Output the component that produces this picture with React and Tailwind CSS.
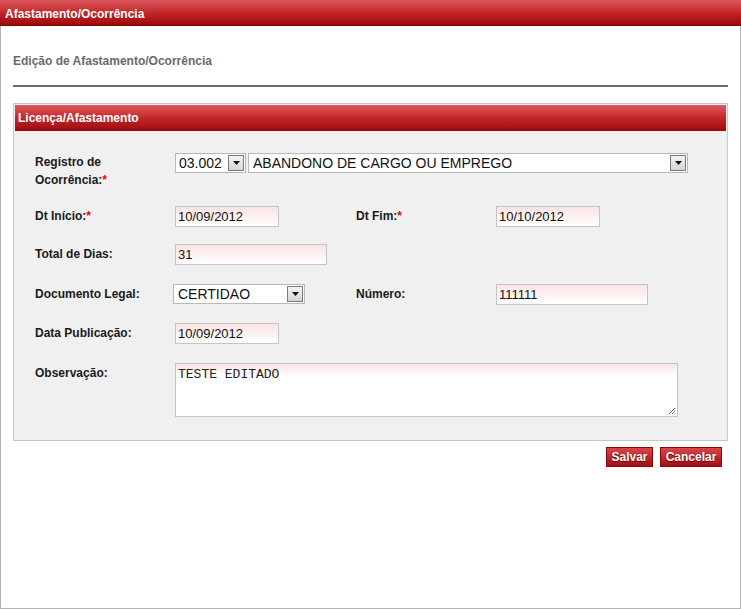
function Arrow() {
  return (
    <span className="absolute right-px top-px bottom-px w-[16px] border border-[#7a7a7a] bg-gradient-to-b from-[#f4f4f4] to-[#d4d4d4] flex items-center justify-center">
      <svg width="7" height="4" viewBox="0 0 7 4">
        <path d="M0 0h7L3.5 4z" fill="#111" />
      </svg>
    </span>
  );
}

function Select({ value, className }) {
  return (
    <div
      className={
        "relative h-[20px] border border-[#b8b8b8] bg-white text-[14px] leading-[18px] text-[#111] pl-[3px] " +
        className
      }
    >
      {value}
      <Arrow />
    </div>
  );
}

function Input({ value, className }) {
  return (
    <div
      className={
        "h-[21px] border border-[#c4c4c4] bg-gradient-to-b from-[#fbe3e3] to-white text-[13px] leading-[19px] text-[#111] pl-[2px] " +
        className
      }
    >
      {value}
    </div>
  );
}

function Label({ children, req }) {
  return (
    <div className="w-[140px] shrink-0 font-bold text-[12px] leading-[20px] text-[#1a1a1a]">
      {children}
      {req && <span className="text-[#e00]">*</span>}
    </div>
  );
}

function RedBtn({ children, className }) {
  return (
    <button className={"h-[20px] border border-[#8a0a0a] bg-gradient-to-b from-[#d6464b] via-[#c1262b] to-[#a30f12] text-white font-bold text-[12px] leading-[18px] [text-shadow:0_1px_1px_#600] " + className}>
      {children}
    </button>
  );
}

export default function App() {
  return (
    <div className="w-[741px] h-[609px] border border-[#b4b4b4] border-t-0 bg-white font-['Liberation_Sans',Arial,sans-serif]">
      <div className="h-[26px] -mx-px bg-gradient-to-b from-[#dc585d] via-[#c3262b] to-[#9c0808] border-b border-[#7e0505] text-white font-bold text-[12px] leading-[28px] pl-[5px]">
        Afastamento/Ocorrência
      </div>
      <div className="px-[12px]">
        <div className="mt-[27px] text-[12px] leading-[16px] font-bold text-[#6a6a6a]">
          Edição de Afastamento/Ocorrência
        </div>
        <div className="mt-[16px] h-[2px] bg-[#6b6b6b]" />
        <div className="mt-[16px] border border-[#c8c8c8] bg-[#f0f0f0] p-px">
          <div className="h-[26px] bg-gradient-to-b from-[#dc585d] via-[#c3262b] to-[#9c0808] text-white font-bold text-[12px] leading-[26px] pl-[3px]">
            Licença/Afastamento
          </div>
          <div className="pl-[20px] pt-[22px] pb-[22px]">
            <div className="flex items-start">
              <div className="w-[140px] shrink-0 font-bold text-[12px] leading-[18px] text-[#1a1a1a]">
                Registro de
                <br />
                Ocorrência:<span className="text-[#e00]">*</span>
              </div>
              <Select value="03.002" className="w-[71px]" />
              <Select value="ABANDONO DE CARGO OU EMPREGO" className="w-[440px] ml-[2px] pl-[4px]" />
            </div>
            <div className="flex items-start mt-[17px]">
              <Label req>Dt Início:</Label>
              <Input value="10/09/2012" className="w-[104px]" />
              <div className="w-[77px]" />
              <Label req>Dt Fim:</Label>
              <Input value="10/10/2012" className="w-[104px]" />
            </div>
            <div className="flex items-start mt-[17px]">
              <Label>Total de Dias:</Label>
              <Input value="31" className="w-[152px]" />
            </div>
            <div className="flex items-start mt-[19px]">
              <Label>Documento Legal:</Label>
              <Select value="CERTIDAO" className="w-[132px] -ml-[2px] pl-[4px]" />
              <div className="w-[51px]" />
              <Label>Número:</Label>
              <Input value="111111" className="w-[152px]" />
            </div>
            <div className="flex items-start mt-[18px]">
              <Label>Data Publicação:</Label>
              <Input value="10/09/2012" className="w-[104px]" />
            </div>
            <div className="flex items-start mt-[19px]">
              <Label>Observação:</Label>
              <div className="relative w-[503px] h-[54px] border border-[#c4c4c4] bg-gradient-to-b from-[#fbe3e3] via-white to-white [background-size:100%_24px] bg-no-repeat bg-white font-['Liberation_Mono','Courier_New',monospace] text-[13px] leading-[17px] text-[#222] pl-[2px] pt-[2px]">
                TESTE EDITADO
                <svg className="absolute right-[1px] bottom-[1px]" width="8" height="8" viewBox="0 0 8 8">
                  <path d="M7 1L1 7M7 4L4 7M7 6.5L6.5 7" stroke="#666" strokeWidth="1" />
                </svg>
              </div>
            </div>
          </div>
        </div>
        <div className="flex justify-end gap-[7px] mt-[6px] pr-[6px]">
          <RedBtn className="w-[47px]">Salvar</RedBtn>
          <RedBtn className="w-[62px]">Cancelar</RedBtn>
        </div>
      </div>
    </div>
  );
}
